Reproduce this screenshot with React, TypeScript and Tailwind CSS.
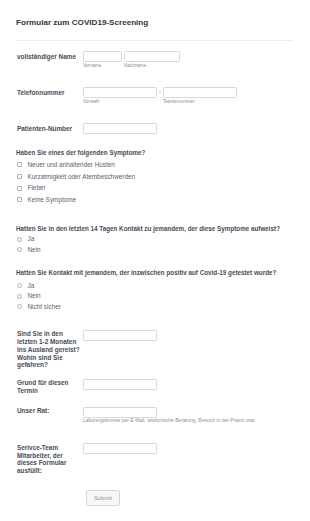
import React from "react";

const font = { fontFamily: '"Liberation Sans", Arial, sans-serif' };

function Input({ w }: { w: string }) {
  return <div className={`${w} h-[11px] border border-[#d6d9de] rounded-[1.5px] bg-white`} />;
}

function Sub({ children }: { children: React.ReactNode }) {
  return <div className="text-[4.6px] leading-[6px] text-[#8b8f99] mt-[1px]">{children}</div>;
}

function Check({ label }: { label: string }) {
  return (
    <div className="h-[11.7px] flex items-center">
      <div className="ml-[17px] w-[5px] h-[5px] border border-[#a9aeb7] rounded-[1px]" />
      <span className="ml-[5.5px] text-[6.4px] text-[#5c6270]">{label}</span>
    </div>
  );
}

function Radio({ label }: { label: string }) {
  return (
    <div className="h-[10.6px] flex items-center">
      <div className="ml-[17px] w-[5px] h-[5px] border border-[#a9aeb7] rounded-full" />
      <span className="ml-[5.5px] text-[6.4px] text-[#5c6270]">{label}</span>
    </div>
  );
}

function Label({ children }: { children: React.ReactNode }) {
  return (
    <div className="w-[67px] pl-[1px] pr-[1px] pt-[0.5px] text-[6.4px] leading-[7.7px] font-bold text-[#474c57]">
      {children}
    </div>
  );
}

export default function App() {
  return (
    <div className="w-[310px] h-[521px] bg-white overflow-hidden" style={font}>
      <div className="pl-[16px] pr-[17px]">
        <div className="pt-[18px] text-[8.1px] leading-[10px] font-bold text-[#2f3542]">
          Formular zum COVID19-Screening
        </div>
        <div className="mt-[12px] h-px bg-[#ecedf0]" />

        {/* Name */}
        <div className="mt-[10px] flex items-start">
          <Label>
            <span className="block pt-[1.5px]">vollständiger Name</span>
          </Label>
          <div className="flex gap-[2px]">
            <div>
              <Input w="w-[39px]" />
              <Sub>Vorname</Sub>
            </div>
            <div>
              <Input w="w-[56px]" />
              <Sub>Nachname</Sub>
            </div>
          </div>
        </div>

        {/* Telefon */}
        <div className="mt-[18px] flex items-start">
          <Label>
            <span className="block pt-[1.5px]">Telefonnummer</span>
          </Label>
          <div className="flex">
            <div>
              <Input w="w-[74px]" />
              <Sub>Vorwahl</Sub>
            </div>
            <div className="w-[6px] text-center text-[6px] leading-[11px] text-[#474c57]">-</div>
            <div>
              <Input w="w-[74px]" />
              <Sub>Telefonnummer</Sub>
            </div>
          </div>
        </div>

        {/* Patient */}
        <div className="mt-[18px] flex items-start">
          <Label>
            <span className="block pt-[1.5px]">Patienten-Number</span>
          </Label>
          <Input w="w-[74px]" />
        </div>

        {/* Symptome */}
        <div className="mt-[15px] text-[6.3px] leading-[8px] font-bold text-[#474c57]">
          Haben Sie eines der folgenden Symptome?
        </div>
        <div className="mt-[2px] -ml-[16px]">
          <Check label="Neuer und anhaltender Husten" />
          <Check label="Kurzatmigkeit oder Atembeschwerden" />
          <Check label="Fieber" />
          <Check label="Keine Symptome" />
        </div>

        <div className="mt-[19px] text-[6.3px] leading-[8px] font-bold text-[#474c57] whitespace-nowrap">
          Hatten Sie in den letzten 14 Tagen Kontakt zu jemandem, der diese Symptome aufweist?
        </div>
        <div className="mt-[1px] -ml-[16px]">
          <Radio label="Ja" />
          <Radio label="Nein" />
        </div>

        <div className="mt-[14.5px] text-[6.3px] leading-[8px] font-bold text-[#474c57] whitespace-nowrap">
          Hatten Sie Kontakt mit jemandem, der inzwischen positiv auf Covid-19 getestet wurde?
        </div>
        <div className="mt-[2.7px] -ml-[16px]">
          <Radio label="Ja" />
          <Radio label="Nein" />
          <Radio label="Nicht sicher" />
        </div>

        {/* Ausland */}
        <div className="mt-[18px] flex items-start">
          <Label>
            Sind Sie in den letzten 1-2 Monaten ins Ausland gereist? Wohin sind Sie gefahren?
          </Label>
          <Input w="w-[74px]" />
        </div>

        <div className="mt-[10px] flex items-start">
          <Label>Grund für diesen Termin</Label>
          <Input w="w-[74px]" />
        </div>

        <div className="mt-[12px] flex items-start">
          <Label>Unser Rat:</Label>
          <div>
            <Input w="w-[74px]" />
            <div className="text-[5px] leading-[5px] text-[#8b8f99] mt-[0.5px] whitespace-nowrap">
              Laborergebnisse per E-Mail, telefonische Beratung, Besuch in der Praxis usw.
            </div>
          </div>
        </div>

        <div className="mt-[20px] flex items-start">
          <Label>Serivce-Team Mitarbeiter, der dieses Formular ausfüllt:</Label>
          <Input w="w-[74px]" />
        </div>

        <div className="mt-[15px] pl-[70px] flex">
          <button className="w-[34px] h-[16px] flex items-center justify-center border border-[#d3d6dc] rounded-[2px] bg-[#f7f7f8] text-[5.8px] leading-[6px] text-[#8b8f99]">
            Submit
          </button>
        </div>
      </div>
    </div>
  );
}
